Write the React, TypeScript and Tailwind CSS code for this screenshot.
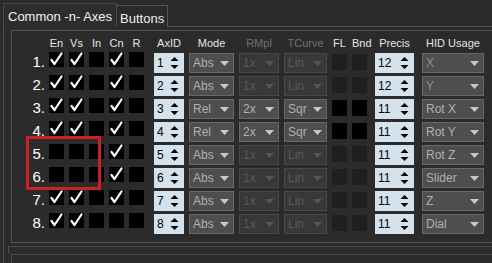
import React from "react";

type Row = {
  n: number;
  en: boolean;
  vs: boolean;
  inv: boolean;
  cn: boolean;
  r: boolean;
  mode: string;
  rm: string;
  tc: string;
  on: boolean;
  prec: number;
  hid: string;
};

const rows: Row[] = [
  { n: 1, en: true, vs: true, inv: false, cn: true, r: false, mode: "Abs", rm: "1x", tc: "Lin", on: false, prec: 12, hid: "X" },
  { n: 2, en: true, vs: true, inv: false, cn: true, r: false, mode: "Abs", rm: "1x", tc: "Lin", on: false, prec: 12, hid: "Y" },
  { n: 3, en: true, vs: true, inv: false, cn: true, r: false, mode: "Rel", rm: "2x", tc: "Sqr", on: true, prec: 11, hid: "Rot X" },
  { n: 4, en: true, vs: true, inv: false, cn: true, r: false, mode: "Rel", rm: "2x", tc: "Sqr", on: true, prec: 11, hid: "Rot Y" },
  { n: 5, en: false, vs: false, inv: false, cn: true, r: false, mode: "Abs", rm: "1x", tc: "Lin", on: false, prec: 11, hid: "Rot Z" },
  { n: 6, en: false, vs: false, inv: false, cn: true, r: false, mode: "Abs", rm: "1x", tc: "Lin", on: false, prec: 11, hid: "Slider" },
  { n: 7, en: true, vs: true, inv: false, cn: true, r: false, mode: "Abs", rm: "1x", tc: "Lin", on: false, prec: 11, hid: "Z" },
  { n: 8, en: true, vs: true, inv: false, cn: false, r: false, mode: "Abs", rm: "1x", tc: "Lin", on: false, prec: 11, hid: "Dial" },
];

function Check({ on }: { on: boolean }) {
  return (
    <div className="w-[15px] h-[15px] bg-black shrink-0 flex items-center justify-center">
      {on && (
        <svg width="15" height="15" viewBox="0 0 15 15">
          <path d="M2.5 8 L5.5 12 L12.5 1.5" fill="none" stroke="#ffffff" strokeWidth="2.2" strokeLinecap="round" strokeLinejoin="round" />
        </svg>
      )}
    </div>
  );
}

function Flag({ on }: { on: boolean }) {
  return <div className={on ? "w-[15px] h-[16px] bg-black shrink-0" : "w-[15px] h-[16px] bg-[#1f1f1f] shrink-0"} />;
}

function Spin({ value, w }: { value: number; w: string }) {
  return (
    <div className={`${w} h-[20px] bg-[#d3e2ed] shrink-0 flex items-center justify-between pl-[3px] pr-[5px]`}>
      <span className="text-[12px] text-black leading-none">{value}</span>
      <svg width="9" height="14" viewBox="0 0 9 14">
        <path d="M0.5 5 L4.5 1 L8.5 5 Z" fill="#000" />
        <path d="M0.5 9 L4.5 13 L8.5 9 Z" fill="#000" />
      </svg>
    </div>
  );
}

function Drop({ text, w, on, dim }: { text: string; w: string; on: boolean; dim?: boolean }) {
  return (
    <div
      className={
        on
          ? `${w} h-[20px] shrink-0 bg-[#4e4e4e] border border-[#686868] flex items-center justify-between pl-[3px] pr-[4px]`
          : `${w} h-[20px] shrink-0 bg-[#383838] border border-[#484848] flex items-center justify-between pl-[3px] pr-[4px]`
      }
    >
      <span className={on ? (dim ? "text-[12px] text-[#8c8c8c] leading-none" : "text-[12px] text-[#b0b0b0] leading-none") : "text-[12px] text-[#595959] leading-none"}>
        {text}
      </span>
      <svg width="9" height="5" viewBox="0 0 9 5">
        <path d="M0 0 L9 0 L4.5 5 Z" fill={on ? "#c8c8c8" : "#555555"} />
      </svg>
    </div>
  );
}

function H({ t, w, dim }: { t: string; w: string; dim?: boolean }) {
  return <div className={`${w} shrink-0 text-center text-[11px] ${dim ? "text-[#707070]" : "text-[#e6e6e6]"}`}>{t}</div>;
}

export default function App() {
  return (
    <div
      className="w-[492px] h-[263px] bg-[#2b2b2b] overflow-hidden relative"
      style={{ fontFamily: '"Liberation Sans", Arial, sans-serif' }}
    >
      {/* tabs */}
      <div className="flex items-end pl-[3px] pt-[3px] h-[27px]">
        <div className="h-[24px] px-[4px] border border-b-0 border-[#4a4a4a] bg-[#2d2d2d] text-[13px] text-[#f2f2f2] flex items-start pt-[3px]">
          Common -n- Axes
        </div>
        <div className="h-[22px] px-[3px] border border-l-0 border-b-0 border-[#555] bg-[#2b2b2b] text-[13px] text-[#eeeeee] flex items-start pt-[3px]">
          Buttons
        </div>
        <div className="flex-1 h-full border-b border-[#555]" />
      </div>

      {/* panel */}
      <div className="ml-[3px] w-[600px] border-l border-[#4d4d4d] pl-[7px] pt-[3px]">
        <div className="border border-[#535353] w-[560px] pb-[6px]">
          {/* header */}
          <div className="flex items-center h-[21px] pt-[3px]">
            <div className="w-[37px] shrink-0" />
            <div className="flex gap-[5px]">
              <H t="En" w="w-[15px]" />
              <H t="Vs" w="w-[15px]" />
              <H t="In" w="w-[15px]" />
              <H t="Cn" w="w-[15px]" />
              <H t="R" w="w-[15px]" />
            </div>
            <div className="flex gap-[5px] ml-[10px]">
              <H t="AxID" w="w-[30px]" />
              <H t="Mode" w="w-[45px]" />
              <H t="RMpl" w="w-[40px]" dim />
              <H t="TCurve" w="w-[43px]" dim />
              <H t="FL" w="w-[15px]" />
              <H t="Bnd" w="w-[15px]" />
            </div>
            <div className="flex gap-[8px] ml-[8px]">
              <H t="Precis" w="w-[39px]" />
              <H t="HID Usage" w="w-[62px]" />
            </div>
          </div>
          {/* rows */}
          {rows.map((r) => (
            <div key={r.n} className="flex items-start h-[23px]">
              <div className="w-[37px] shrink-0 text-right pr-[4px] text-[15px] leading-[20px] text-white">{r.n}.</div>
              <div className="flex gap-[5px]">
                <Check on={r.en} />
                <Check on={r.vs} />
                <Check on={r.inv} />
                <Check on={r.cn} />
                <Check on={r.r} />
              </div>
              <div className="flex gap-[5px] ml-[10px] mt-[1px]">
                <Spin value={r.n} w="w-[30px]" />
                <Drop text={r.mode} w="w-[45px]" on />
                <Drop text={r.rm} w="w-[40px]" on={r.on} />
                <Drop text={r.tc} w="w-[43px]" on={r.on} />
                <div className="flex gap-[5px] mt-[1px]">
                  <Flag on={r.on} />
                  <Flag on={r.on} />
                </div>
              </div>
              <div className="flex gap-[8px] ml-[8px] mt-[1px]">
                <Spin value={r.prec} w="w-[39px]" />
                <Drop text={r.hid} w="w-[62px]" on dim={r.n <= 2} />
              </div>
            </div>
          ))}
        </div>
        <div className="-ml-[3px] mt-[3px] h-[8px] border-t border-l border-[#4a4a4a]" />
        <div className="h-[20px] border-t border-l border-[#4a4a4a]" />
      </div>

      {/* highlight */}
      <div className="absolute left-[26px] top-[136px] w-[75px] h-[54px] border-[3px] border-[#cf1f1f]" />
    </div>
  );
}
